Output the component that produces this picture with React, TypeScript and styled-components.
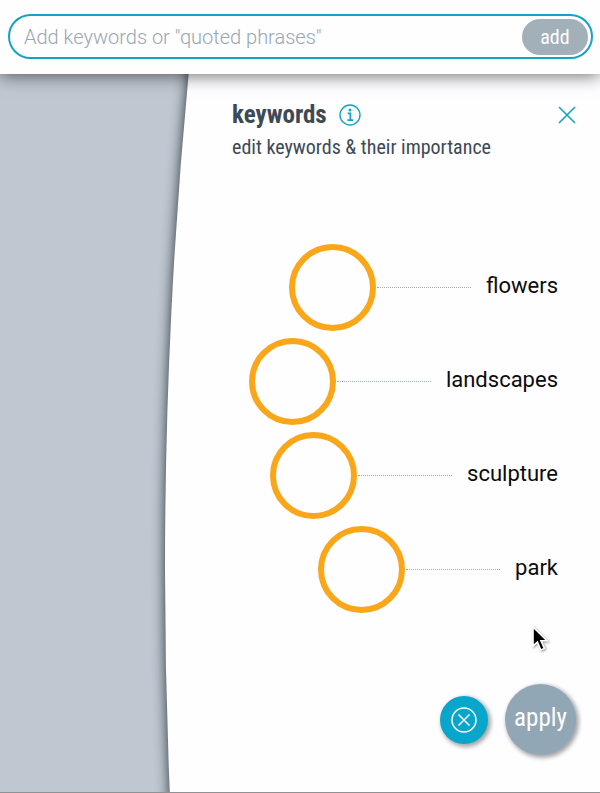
import React from "react";
import styled, { createGlobalStyle } from "styled-components";

const sans = `Roboto, "Noto Sans", sans-serif`;
const narrow = `"Roboto Condensed", "Liberation Sans Narrow", Roboto, sans-serif`;
const teal = "#15a3c3";
const ink = "#3d4a54";
const paper = "#fefdff";

const GlobalStyle = createGlobalStyle`
  *, *::before { box-sizing: border-box; }
  body { margin: 0; font-family: ${sans}; background: ${paper}; }
  button { border: 0; padding: 0; cursor: pointer; }
`;

const Page = styled.div`
  position: relative;
  display: flex;
  flex-direction: column;
  min-height: 100vh;
  border-bottom: 1px solid #8f9194;
`;

const Header = styled.header`
  position: relative;
  z-index: 2;
  padding: 14px 7px 15px 8px;
  background: ${paper};
  box-shadow: 0 2px 16px rgba(0, 0, 0, 0.55);
`;

const SearchForm = styled.form`
  display: flex;
  align-items: center;
  height: 45px;
  padding: 0 3px 0 14px;
  border: 2px solid ${teal};
  border-radius: 24px;
`;

const SearchInput = styled.input`
  flex: 1;
  min-width: 0;
  padding: 0;
  border: 0;
  outline: 0;
  background: transparent;
  font: 300 20px/24px ${sans};
  color: ${ink};
  &::placeholder { color: #98a7b0; opacity: 1; }
`;

const AddButton = styled.button`
  width: 66px;
  height: 36px;
  border-radius: 18px;
  background: #a2b1b9;
  color: #fff;
  font: 20px/24px ${narrow};
`;

const Stage = styled.main`
  position: relative;
  display: flex;
  flex: 1;
  justify-content: flex-end;
  overflow: hidden;
  background: #bfc7d1;
`;

/* The drawer's edge is a shallow arc: the rim of a very large disc. */
const Drawer = styled.section`
  position: relative;
  display: flex;
  flex-direction: column;
  width: 435px;
  padding: 25px 24px 37px 67px;
  &::before {
    content: "";
    position: absolute;
    z-index: 0;
    left: 0;
    top: calc(69% - 5200px);
    width: 10400px;
    height: 10400px;
    border-radius: 50%;
    background: ${paper};
    box-shadow: 0 0 13px rgba(20, 30, 36, 0.9);
  }
  & > * { position: relative; }
`;

const TitleRow = styled.div`
  display: flex;
  align-items: center;
  height: 32px;
`;

const Title = styled.h1`
  margin: 0 12px 0 0;
  font: bold 25px/32px ${narrow};
  color: ${ink};
`;

const IconButton = styled.button<{ $end?: boolean }>`
  display: flex;
  margin-left: ${(p) => (p.$end ? "auto" : "0")};
  background: transparent;
  color: ${teal};
`;

const Subtitle = styled.p`
  margin: 3px 0 0;
  font: 20px/26px ${narrow};
  color: ${ink};
`;

const KeywordList = styled.ul`
  display: flex;
  flex-direction: column;
  gap: 7px;
  margin: 84px 0 0;
  padding: 0 18px 0 0;
  list-style: none;
`;

const KeywordRow = styled.li`
  display: flex;
  align-items: center;
  justify-content: flex-end;
  height: 87px;
`;

const Ring = styled.button`
  width: 87px;
  height: 87px;
  border: 6px solid #faa619;
  border-radius: 50%;
  background: transparent;
`;

const Leader = styled.span`
  width: 94px;
  margin: 0 15px 0 1px;
  border-top: 1px dotted #a3adb5;
`;

const Keyword = styled.span`
  padding-bottom: 4px;
  font: 22px/28px ${sans};
  color: #0b0b0d;
`;

const Actions = styled.footer`
  display: flex;
  align-items: center;
  justify-content: flex-end;
  gap: 17px;
  margin-top: auto;
`;

const RoundButton = styled.button<{ $size: number; $color: string }>`
  display: flex;
  align-items: center;
  justify-content: center;
  width: ${(p) => p.$size}px;
  height: ${(p) => p.$size}px;
  border-radius: 50%;
  background: ${(p) => p.$color};
  box-shadow: 2px 2px 4px 1px rgba(0, 0, 0, 0.35);
  color: #fff;
`;

const ButtonLabel = styled.span`
  padding-bottom: 4px;
  font: 25px/30px ${narrow};
`;

const Pointer = styled.svg`
  position: absolute;
  z-index: 3;
  right: 51px;
  bottom: 139px;
  filter: drop-shadow(1px 1px 1px rgba(0, 0, 0, 0.4));
`;

const keywords = ["flowers", "landscapes", "sculpture", "park"];

export default function App() {
  return (
    <Page>
      <GlobalStyle />
      <Header>
        <SearchForm onSubmit={(e) => e.preventDefault()}>
          <SearchInput
            aria-label="Add keywords"
            placeholder={'Add keywords or "quoted phrases"'}
          />
          <AddButton type="submit">add</AddButton>
        </SearchForm>
      </Header>
      <Stage>
        <Drawer>
          <TitleRow>
            <Title>keywords</Title>
            <IconButton type="button" aria-label="About keywords">
              <svg width="22" height="22" viewBox="0 0 22 22" fill="none" stroke="currentColor">
                <circle cx="11" cy="11" r="10" strokeWidth="1.4" />
                <circle cx="11" cy="6" r="1.5" fill="currentColor" stroke="none" />
                <path d="M8.6 9.4H11.4V16M8.4 16.2H14" strokeWidth="1.8" />
              </svg>
            </IconButton>
            <IconButton type="button" aria-label="Close" $end>
              <svg width="18" height="18" viewBox="0 0 18 18" fill="none" stroke="currentColor" strokeWidth="1.6">
                <path d="M1 1L17 17M17 1L1 17" />
              </svg>
            </IconButton>
          </TitleRow>
          <Subtitle>edit keywords &amp; their importance</Subtitle>
          <KeywordList>
            {keywords.map((word) => (
              <KeywordRow key={word}>
                <Ring type="button" aria-label={`Importance of ${word}`} />
                <Leader />
                <Keyword>{word}</Keyword>
              </KeywordRow>
            ))}
          </KeywordList>
          <Actions>
            <RoundButton type="button" aria-label="Clear keywords" $size={48} $color="#08a6ca">
              <svg width="26" height="26" viewBox="0 0 26 26" fill="none" stroke="currentColor" strokeWidth="1.5">
                <circle cx="13" cy="13" r="12" />
                <path d="M7.5 7.5L18.5 18.5M18.5 7.5L7.5 18.5" />
              </svg>
            </RoundButton>
            <RoundButton type="button" $size={71} $color="#92a7b5">
              <ButtonLabel>apply</ButtonLabel>
            </RoundButton>
          </Actions>
        </Drawer>
      </Stage>
      <Pointer width="18" height="28" viewBox="0 0 18 28" aria-hidden="true">
        <path
          d="M2 2V21L6.4 17L9.8 25L13.4 23.4L10 15.8H16Z"
          fill="#000"
          stroke="#fff"
          strokeWidth="1.6"
        />
      </Pointer>
    </Page>
  );
}
